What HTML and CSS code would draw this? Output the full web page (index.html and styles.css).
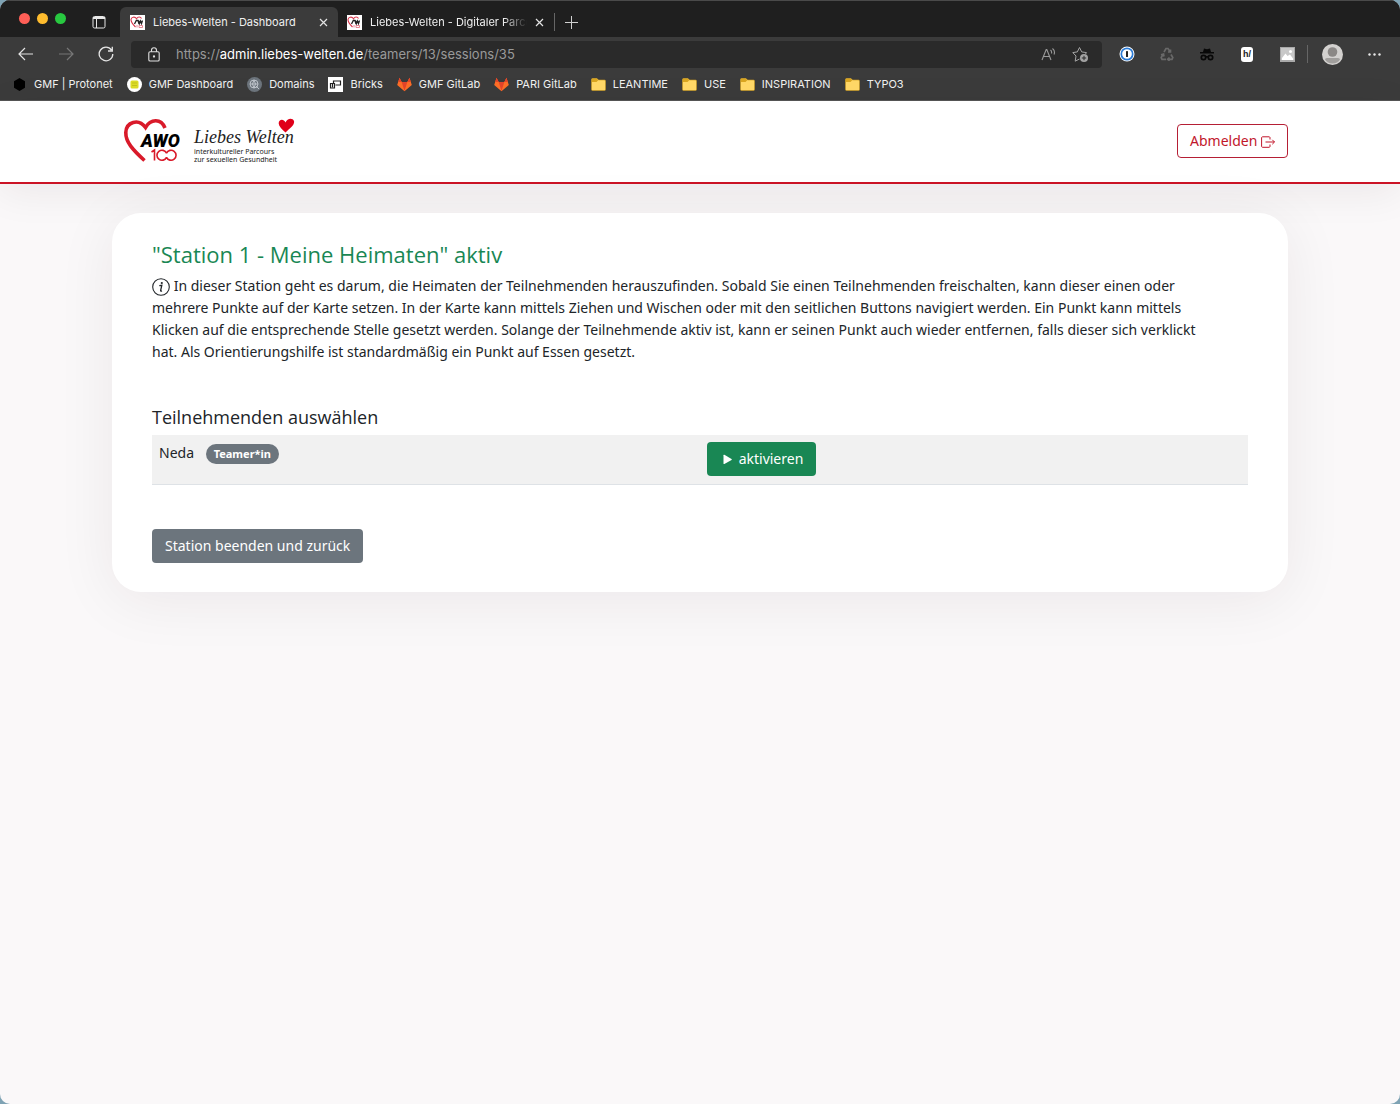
FILE: index.html
```
<!DOCTYPE html>
<html lang="de">
<head>
    <meta charset="UTF-8">
    <meta name="viewport" content="width=device-width, initial-scale=1.0">
    <title>Liebes-Welten - Dashboard</title>
    <link rel="stylesheet" href="styles.css">
</head>
<body>

    <!-- shared icons -->
    <svg class="sprite" width="0" height="0" aria-hidden="true">
        <symbol id="favicon" viewBox="0 0 15 15">
            <rect width="15" height="15" fill="#fff"/>
            <path d="M5.5 12C2 8.500.8 6.500 1 4.500 1.300 2 4.800 1.200 6.500 3.700 8 1.300 10.500 1.500 11.500 3.500" fill="none" stroke="#d8344a" stroke-width="1.100"/>
            <path d="M4.500 9 6.300 5.500H8L9 9M8.500 5.500 9.500 8.500 10.500 6 11.500 8.500 12.500 5.500" fill="none" stroke="#222" stroke-width="1.300"/>
            <path d="M7 10v2.500M9 10.500h3.500v2H9z" fill="none" stroke="#e06a78" stroke-width=".8"/>
        </symbol>
        <symbol id="close" viewBox="0 0 9 9">
            <path d="M1 1l7 7M8 1L1 8" fill="none" stroke="#e4e4e4" stroke-width="1.200"/>
        </symbol>
        <symbol id="folder" viewBox="0 0 15 15">
            <path d="M.5 2.500A1 1 0 0 1 1.500 1.500H6L7.500 3H13.500A1 1 0 0 1 14.500 4V12.500A1 1 0 0 1 13.500 13.500H1.500A1 1 0 0 1 .5 12.500z" fill="#ffd766" stroke="#c9991c" stroke-width=".6"/>
            <path d="M.8 2.500A.8.8 0 0 1 1.500 1.800H6L7.300 3.200 5.500 5H.8z" fill="#d9a520"/>
        </symbol>
        <symbol id="gitlab" viewBox="0 0 15 15">
            <path d="M2.500.8 4.700 5H10.300L12.500.8 14.800 8 7.500 14.300.2 8z" fill="#fc6d26"/>
            <path d="M4.700 5H10.300L7.500 14z" fill="#e24329"/>
            <path d="M2.500.8 4.700 5H1.200zM12.500.8 13.800 5H10.300z" fill="#e24329"/>
        </symbol>
    </svg>

    <div class="window">

        <div class="browser">
            <div class="tab-bar">
                <div class="lights">
                    <span class="light red"></span>
                    <span class="light yellow"></span>
                    <span class="light green"></span>
                </div>
                <button class="icon-btn tab-menu" aria-label="Tab-Aktionen">
                    <svg width="14" height="14" viewBox="0 0 14 14" fill="none" stroke="#e8e8e8">
                        <rect x="1" y="1.500" width="12" height="11.500" rx="1.500"/>
                        <path d="M1 3h12" stroke-width="2"/>
                        <path d="M4.500 4v9"/>
                    </svg>
                </button>
                <div class="tab active">
                    <svg width="15" height="15"><use href="#favicon"/></svg>
                    <span class="tab-title">Liebes-Welten - Dashboard</span>
                    <button class="icon-btn" aria-label="Tab schließen"><svg width="9" height="9"><use href="#close"/></svg></button>
                </div>
                <div class="tab">
                    <svg width="15" height="15"><use href="#favicon"/></svg>
                    <span class="tab-title fade">Liebes-Welten - Digitaler Parcours</span>
                    <button class="icon-btn" aria-label="Tab schließen"><svg width="9" height="9"><use href="#close"/></svg></button>
                </div>
                <span class="divider"></span>
                <button class="icon-btn new-tab" aria-label="Neuer Tab">
                    <svg width="13" height="13" viewBox="0 0 13 13" stroke="#d0d0d0"><path d="M6.500 0v13M0 6.500h13"/></svg>
                </button>
            </div>

            <div class="toolbar">
                <button class="icon-btn tool" aria-label="Zurück">
                    <svg width="16" height="14" viewBox="0 0 16 14" fill="none" stroke="#e4e4e4" stroke-width="1.200"><path d="M15 7H1M7 1 1 7l6 6"/></svg>
                </button>
                <button class="icon-btn tool" aria-label="Vorwärts">
                    <svg width="16" height="14" viewBox="0 0 16 14" fill="none" stroke="#777" stroke-width="1.200"><path d="M1 7h14M9 1l6 6-6 6"/></svg>
                </button>
                <button class="icon-btn tool" aria-label="Neu laden">
                    <svg width="16" height="16" viewBox="0 0 16 16" fill="none" stroke="#e4e4e4" stroke-width="1.300"><path d="M14.800 8A6.800 6.800 0 1 1 13.500 4M14.300.8V5H10"/></svg>
                </button>
                <div class="address">
                    <svg width="12" height="15" viewBox="0 0 12 15" fill="none" stroke="#e0e0e0" stroke-width="1.100">
                        <rect x=".8" y="4.800" width="10.400" height="9.200" rx="1.300"/>
                        <path d="M3.500 4.800V3.200a2.500 2.500 0 0 1 5 0v1.600"/>
                        <circle cx="6" cy="9.500" r=".6" fill="#e0e0e0"/>
                    </svg>
                    <div class="url" role="textbox" aria-label="Adresse">https://<b>admin.liebes-welten.de</b>/teamers/13/sessions/35</div>
                    <button class="icon-btn" aria-label="Laut vorlesen">
                        <svg width="15" height="14" viewBox="0 0 15 14" fill="none" stroke="#9a9a9a" stroke-width="1.100">
                            <path d="M1 13 5.200 2.500H5.800L10 13M2.500 9.500h6M9.500 3Q11 4.200 10.500 6.500M11.500 1.500Q14.500 4 13 7.500"/>
                        </svg>
                    </button>
                    <button class="icon-btn" aria-label="Zu Favoriten hinzufügen">
                        <svg width="16" height="16" viewBox="0 0 16 16">
                            <path d="M7.500 13 3.200 15.200 4 10 .8 6.600 5.300 5.900 7.500 1.500 9.700 5.900 14.500 6.600 13.500 8" fill="none" stroke="#a4a4a4"/>
                            <circle cx="12" cy="12" r="4" fill="#a4a4a4"/>
                            <path d="M12 9.800v4.400M9.800 12h4.400" stroke="#2a2a2a"/>
                        </svg>
                    </button>
                </div>
                <button class="icon-btn tool" aria-label="1Password">
                    <svg width="16" height="16" viewBox="0 0 16 16">
                        <circle cx="8" cy="8" r="7.500" fill="#fff"/>
                        <circle cx="8" cy="8" r="5.700" fill="#fff" stroke="#2b7bd6" stroke-width="1.700"/>
                        <rect x="7" y="5" width="2" height="6" rx=".6" fill="#222"/>
                    </svg>
                </button>
                <button class="icon-btn tool" aria-label="Recycling">
                    <svg width="14" height="14" viewBox="0 0 14 14" fill="none" stroke="#696969" stroke-width="1.700">
                        <path d="M4 5 6 1.500H8L10 4.500M10.500 2.500V5H8M11 7.500 12.800 10.500 12 12.300H8M9.500 10.500 7.700 12.300 9.500 14M6 12.300H2L1.200 10.500 3 7.500M1 7.800 3.500 7 4 9.500"/>
                    </svg>
                </button>
                <button class="icon-btn tool" aria-label="Inkognito">
                    <svg width="14" height="13" viewBox="0 0 14 13">
                        <path d="M4 .5 7 1.200 10 .5 11 4H14V5.500H0V4H3z" fill="#080808"/>
                        <g fill="none" stroke="#080808" stroke-width="1.700"><circle cx="3.500" cy="9.500" r="2.200"/><circle cx="10.500" cy="9.500" r="2.200"/><path d="M5 8.800h4"/></g>
                    </svg>
                </button>
                <button class="icon-btn tool" aria-label="Hypothesis"><span class="ext-h">h/</span></button>
                <button class="icon-btn tool" aria-label="Bilder">
                    <svg width="15" height="15" viewBox="0 0 15 15">
                        <rect width="15" height="15" fill="#a9a9a9"/>
                        <path d="M1 1h13v12H1z" fill="#c8c8c8"/>
                        <path d="M2 11 5.500 6.500 7.500 9 10 7.500 13 11.500V13H2z" fill="#fff"/>
                        <circle cx="10.500" cy="4.500" r="1.500" fill="#fff"/>
                    </svg>
                </button>
                <span class="divider"></span>
                <button class="icon-btn profile" aria-label="Profil">
                    <svg width="21" height="21" viewBox="0 0 21 21">
                        <circle cx="10.500" cy="10.500" r="10.500" fill="#d3d1cf"/>
                        <circle cx="10.500" cy="8" r="4.800" fill="#8b8886"/>
                        <path d="M3 15.500Q3 14 5 14H16Q18 14 18 15.500 15.500 19.500 10.500 19.500 5.500 19.500 3 15.500z" fill="#a19f9d"/>
                    </svg>
                </button>
                <button class="icon-btn more" aria-label="Einstellungen">
                    <svg width="13" height="3" viewBox="0 0 13 3" fill="#e8e8e8"><circle cx="1.500" cy="1.500" r="1.200"/><circle cx="6.500" cy="1.500" r="1.200"/><circle cx="11.500" cy="1.500" r="1.200"/></svg>
                </button>
            </div>

            <nav class="bookmarks" aria-label="Favoriten">
                <a href="#">
                    <svg width="15" height="15" viewBox="0 0 15 15"><path d="M7.500 1 13 4.200V10.800L7.500 14 2 10.800V4.200z" fill="#000"/></svg>
                    GMF | Protonet
                </a>
                <a href="#">
                    <svg width="15" height="15" viewBox="0 0 15 15"><circle cx="7.500" cy="7.500" r="7.500" fill="#fff"/><rect x="3.500" y="3.500" width="8" height="8" rx="1.500" fill="#dcdc28"/><path d="M5 6h5M5 8.500h5" stroke="#c3c31a"/></svg>
                    GMF Dashboard
                </a>
                <a href="#">
                    <svg width="15" height="15" viewBox="0 0 15 15"><circle cx="7.500" cy="7.500" r="7.500" fill="#6c747c"/><g fill="none" stroke="#c4cad0" stroke-width=".9"><circle cx="7" cy="7" r="4"/><path d="M3 7h8M7 3q-3 4 0 8M7 3q3 4 0 8M9 9l3 3"/></g></svg>
                    Domains
                </a>
                <a href="#">
                    <svg width="15" height="15" viewBox="0 0 15 15"><rect width="15" height="15" fill="#fff"/><path d="M2.500 6.500h4v4.500h-4zM5.500 6V4h7v4H7.500" fill="none" stroke="#222" stroke-width="1.200"/><path d="M4.500 7v3.500" stroke="#222" stroke-width="1.200"/></svg>
                    Bricks
                </a>
                <a href="#"><svg width="15" height="15"><use href="#gitlab"/></svg>GMF GitLab</a>
                <a href="#"><svg width="15" height="15"><use href="#gitlab"/></svg>PARI GitLab</a>
                <a href="#"><svg width="15" height="15"><use href="#folder"/></svg>LEANTIME</a>
                <a href="#"><svg width="15" height="15"><use href="#folder"/></svg>USE</a>
                <a href="#"><svg width="15" height="15"><use href="#folder"/></svg>INSPIRATION</a>
                <a href="#"><svg width="15" height="15"><use href="#folder"/></svg>TYPO3</a>
            </nav>
        </div>

        <header class="page-header">
            <div class="container header-inner">
                <a class="brand" href="#" aria-label="Liebes Welten">
                    <svg width="60" height="48" viewBox="0 0 60 48">
                        <path d="M24.500 43.500C13 33 5.500 25 5.800 15.500 6.200 5 18.500 1 25.500 10.500 30.500 2 41 1 45 11" fill="none" stroke="#d91a2a" stroke-width="3.600"/>
                        <text class="logo-awo" x="21" y="30">AWO</text>
                        <g fill="none" stroke="#d91a2a" stroke-width="1.600">
                            <path d="M31.500 35 34.500 33V43.500M46.500 36.200A5 5 0 1 0 46.500 40.300M46.500 36.200A5 5 0 1 1 46.500 40.300"/>
                        </g>
                    </svg>
                    <span class="brand-text">
                        <span class="brand-name">Liebes Welten</span>
                        <span class="brand-sub">interkultureller Parcours<br>zur sexuellen Gesundheit</span>
                        <svg class="brand-heart" width="17" height="15" viewBox="0 0 17 15"><path d="M7.500 14.500Q1 9 .7 5.500C.5 1.500 5.500.2 7.500 4.500 9 .2 14.500-.8 16 3 17 7 11.500 10.500 7.500 14.500z" fill="#e0001a"/></svg>
                    </span>
                </a>
                <button class="btn btn-outline">Abmelden
                    <svg width="14" height="12" viewBox="0 0 14 12" fill="none" stroke="currentColor"><path d="M9 3.500V1.500A1 1 0 0 0 8 .8H1.500A1 1 0 0 0 .6 1.500V10.500A1 1 0 0 0 1.500 11.300H8A1 1 0 0 0 9 10.500V8.500M4.500 6H13.500M11.300 3.800 13.500 6 11.300 8.200"/></svg>
                </button>
            </div>
        </header>

        <main class="container card">
            <h1>"Station 1 - Meine Heimaten" aktiv</h1>
            <p class="info">
                <svg width="18" height="18" viewBox="0 0 18 18"><circle cx="9" cy="9" r="8.300" fill="none" stroke="#212529" stroke-width="1.100"/><circle cx="9.800" cy="5" r="1.100" fill="#212529"/><path d="M7.300 7.700 9.800 7.300 8.600 12.500Q8.500 13.400 10 12.800" fill="none" stroke="#212529" stroke-width="1.300"/></svg>
                In dieser Station geht es darum, die Heimaten der Teilnehmenden herauszufinden. Sobald Sie einen Teilnehmenden freischalten, kann dieser einen oder mehrere Punkte auf der Karte setzen. In der Karte kann mittels Ziehen und Wischen oder mit den seitlichen Buttons navigiert werden. Ein Punkt kann mittels Klicken auf die entsprechende Stelle gesetzt werden. Solange der Teilnehmende aktiv ist, kann er seinen Punkt auch wieder entfernen, falls dieser sich verklickt hat. Als Orientierungshilfe ist standardmäßig ein Punkt auf Essen gesetzt.
            </p>

            <h2>Teilnehmenden auswählen</h2>
            <table class="participants">
                <tbody>
                    <tr>
                        <td>Neda <span class="badge">Teamer*in</span></td>
                        <td>
                            <button class="btn btn-success">
                                <svg width="15" height="15" viewBox="0 0 15 15"><path d="M3.500 4.300Q3.500 3.300 4.400 3.800L11.500 8Q12.200 8.500 11.500 9L4.400 13Q3.500 13.400 3.500 12.500z" fill="#fff"/></svg>
                                aktivieren
                            </button>
                        </td>
                    </tr>
                </tbody>
            </table>

            <button class="btn btn-secondary">Station beenden und zurück</button>
        </main>

    </div>

</body>
</html>
```

FILE: styles.css
```
* {
    box-sizing: border-box;
}

body {
    margin: 0;
    background-color: #7fa3b4;
    color: #212529;
    font-family: "Noto Sans", "Open Sans", sans-serif;
    font-size: 14px;
    line-height: 22px;
}

.sprite {
    position: absolute;
}

.window {
    min-height: 100vh;
    background-color: #faf8f9;
    border-radius: 10px;
    overflow: hidden;
}

/* browser */
.browser {
    background-color: #3b3b3b;
    color: #f0f0f0;
    font-family: Inter, "Liberation Sans", sans-serif;
    font-size: 11px;
    line-height: 16px;
    border-bottom: 1px solid #555;
}

.icon-btn {
    display: flex;
    align-items: center;
    justify-content: center;
    padding: 0;
    border: 0;
    background: none;
    cursor: pointer;
}

.tab-bar {
    display: flex;
    height: 37px;
    padding-top: 6px;
    background-color: #1f1f1f;
    border-top: 1px solid #4a4a4a;
}

.lights {
    display: flex;
    gap: 7px;
    padding: 6px 0 0 19px;
}

.light {
    width: 11px;
    height: 11px;
    border-radius: 50%;
}

.red {
    background-color: #ff5f57;
}

.yellow {
    background-color: #febc2e;
}

.green {
    background-color: #28c840;
}

.tab-menu {
    width: 54px;
    padding-left: 11px;
}

.tab {
    display: flex;
    align-items: center;
    gap: 8px;
    width: 216px;
    padding: 0 10px 0 9px;
}

.tab.active {
    width: 218px;
    padding-left: 10px;
    background-color: #3b3b3b;
    border-radius: 6px 6px 0 0;
}

.tab-title {
    flex: 1;
    overflow: hidden;
    white-space: nowrap;
}

.fade {
    -webkit-mask-image: linear-gradient(to right, #000 85%, transparent);
    mask-image: linear-gradient(to right, #000 85%, transparent);
}

.divider {
    align-self: center;
    width: 1px;
    height: 18px;
    background-color: #666;
}

.new-tab {
    width: 32px;
}

.toolbar {
    display: flex;
    align-items: center;
    height: 34px;
    padding: 0 8px 0 6px;
}

.tool {
    width: 40px;
    height: 26px;
}

.profile {
    width: 48px;
}

.more {
    width: 36px;
}

.address {
    display: flex;
    flex: 1;
    align-items: center;
    gap: 16px;
    height: 27px;
    margin: 0 5px;
    padding: 0 14px 0 17px;
    background-color: #2a2a2a;
    border-radius: 4px;
}

.url {
    flex: 1;
    color: #999;
    font-size: 13px;
}

.url b {
    color: #fff;
    font-weight: 400;
}

.ext-h {
    padding: 0 2px;
    background-color: #fff;
    border-radius: 3px;
    color: #222;
    font-size: 9px;
    font-weight: 700;
    line-height: 15px;
}

.bookmarks {
    display: flex;
    gap: 14px;
    height: 29px;
    padding: 5px 12px 0;
}

.bookmarks a {
    display: flex;
    align-items: center;
    gap: 7px;
    height: 16px;
    color: #f0f0f0;
    text-decoration: none;
    white-space: nowrap;
}

/* page */
.container {
    width: 84%;
    max-width: 1200px;
    margin: 0 auto;
}

.page-header {
    background-color: #fff;
    border-bottom: 2px solid #cb1426;
    box-shadow: 0 8px 40px rgba(40, 20, 30, 0.07);
}

.header-inner {
    display: flex;
    align-items: center;
    justify-content: space-between;
    height: 81px;
    padding-bottom: 1px;
}

.brand {
    display: flex;
    align-items: center;
    gap: 14px;
    padding-left: 8px;
    color: #222;
    text-decoration: none;
}

.logo-awo {
    font-family: Roboto, sans-serif;
    font-size: 18px;
    font-style: italic;
    font-weight: 900;
}

.brand-text {
    display: flex;
    flex-direction: column;
    position: relative;
    padding-top: 8px;
}

.brand-name {
    font-family: "Liberation Serif", serif;
    font-size: 18px;
    font-style: italic;
    line-height: 22px;
}

.brand-sub {
    font-family: "Noto Sans", sans-serif;
    font-size: 7px;
    line-height: 8px;
}

.brand-heart {
    position: absolute;
    top: 0;
    left: 84px;
}

.btn {
    padding: 5px 12px;
    border: 1px solid transparent;
    border-radius: 4px;
    color: #fff;
    font-family: inherit;
    font-size: 14px;
    line-height: 22px;
    cursor: pointer;
}

.btn svg {
    vertical-align: -2px;
}

.btn-outline {
    background-color: #fff;
    border-color: #b51f35;
    color: #c1162b;
}

.btn-success {
    background-color: #198754;
}

.btn-secondary {
    background-color: #6c757d;
}

.card {
    margin-top: 29px;
    padding: 28px 40px 29px;
    background-color: #fff;
    border-radius: 29px;
    box-shadow: 0 8px 60px rgba(40, 20, 30, 0.07);
}

h1 {
    margin: 0 0 7px;
    color: #198754;
    font-family: "Open Sans", sans-serif;
    font-size: 22px;
    font-weight: 400;
    line-height: 27px;
}

.info {
    max-width: 1055px;
    margin: 0 0 43px;
}

.info svg {
    vertical-align: -5px;
}

h2 {
    margin: 0 0 7px;
    font-family: "Open Sans", sans-serif;
    font-size: 18px;
    font-weight: 400;
    line-height: 22px;
}

.participants {
    width: 100%;
    margin-bottom: 44px;
    border-collapse: collapse;
    table-layout: fixed;
}

.participants td {
    padding: 7px 7px 8px;
    background-color: #f1f1f1;
    border-bottom: 1px solid #dee2e6;
    vertical-align: top;
}

.badge {
    display: inline-block;
    margin-left: 8px;
    padding: 4px 8px;
    background-color: #6c757d;
    border-radius: 10px;
    color: #fff;
    font-size: 11px;
    font-weight: 700;
    line-height: 12px;
}
```
